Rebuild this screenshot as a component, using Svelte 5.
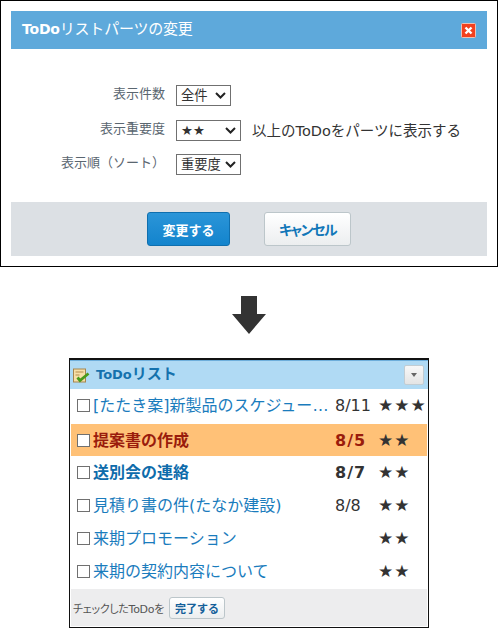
<script lang="ts">
	const fields = [
		{ label: '表示件数', options: ['全件'], width: 55 },
		{ label: '表示重要度', options: ['★★'], width: 65, note: '以上のToDoをパーツに表示する' },
		{ label: '表示順（ソート）', options: ['重要度'], width: 65 }
	];

	const todos = [
		{ title: '[たたき案]新製品のスケジュール検討', date: '8/11', stars: '★★★', kind: '' },
		{ title: '提案書の作成', date: '8/5', stars: '★★', kind: 'overdue' },
		{ title: '送別会の連絡', date: '8/7', stars: '★★', kind: 'today' },
		{ title: '見積り書の件(たなか建設)', date: '8/8', stars: '★★', kind: '' },
		{ title: '来期プロモーション', date: '', stars: '★★', kind: '' },
		{ title: '来期の契約内容について', date: '', stars: '★★', kind: '' }
	];
</script>

<div class="page">
	<section class="dialog">
		<header class="dialog-head">
			<h2><b>ToDo</b>リストパーツの変更</h2>
			<svg class="close" width="15" height="15" viewBox="0 0 15 15" aria-label="閉じる">
				<rect x="0.5" y="0.5" width="14" height="14" rx="1" fill="#f2401f" stroke="#eec0b4" />
				<path d="M4.5 4.5l6 6M10.5 4.5l-6 6" stroke="#fff" stroke-width="2.4" />
			</svg>
		</header>

		<div class="fields">
			{#each fields as field}
				<div class="field">
					<span class="label">{field.label}</span>
					<select style="width: {field.width}px">
						{#each field.options as option}
							<option>{option}</option>
						{/each}
					</select>
					{#if field.note}
						<span class="note">{field.note}</span>
					{/if}
				</div>
			{/each}
		</div>

		<footer class="dialog-foot">
			<button class="primary">変更する</button>
			<button class="secondary">キャンセル</button>
		</footer>
	</section>

	<svg class="arrow" width="34" height="38" viewBox="0 0 34 38">
		<path d="M9 0h16v18h9L17 38 0 18h9z" fill="#333" />
	</svg>

	<section class="panel">
		<header class="panel-head">
			<svg width="18" height="18" viewBox="0 0 18 18">
				<rect x="0.5" y="3" width="12" height="13" fill="#f6dfa8" stroke="#a5854e" />
				<path d="M2.5 6h8M2.5 9h4" stroke="#b78d4f" />
				<path d="M4.500 11.500l2.500 3L15.500 7.500" fill="none" stroke="#4a9a1c" stroke-width="2.8" />
			</svg>
			<h3><b>ToDo</b>リスト</h3>
			<button class="menu" aria-label="メニュー"><span></span></button>
		</header>

		<ul>
			{#each todos as todo}
				<li class={todo.kind}>
					<span class="check"></span>
					<span class="title">{todo.title}</span>
					<span class="date">{todo.date}</span>
					<span class="stars">{todo.stars}</span>
				</li>
			{/each}
		</ul>

		<footer class="panel-foot">
			<span>チェックしたToDoを</span>
			<button class="done">完了する</button>
		</footer>
	</section>
</div>

<style>
	:global(body) {
		margin: 0;
		background: #fff;
		font-family: "DejaVu Sans", "Noto Sans CJK JP", sans-serif;
	}

	.page {
		width: 498px;
		display: flex;
		flex-direction: column;
		align-items: center;
	}

	.dialog {
		box-sizing: border-box;
		width: 498px;
		height: 267px;
		padding: 10px;
		border: 1px solid #000;
		display: flex;
		flex-direction: column;
	}

	.dialog-head {
		height: 38px;
		flex: none;
		padding: 0 11px;
		background: #5ea9db;
		color: #fff;
		display: flex;
		align-items: center;
		justify-content: space-between;
	}

	.dialog-head h2 {
		margin: -5px 0 0;
		font-size: 15px;
		font-weight: 400;
		letter-spacing: -0.2px;
	}

	.dialog-head b {
		font-size: 14px;
	}

	.fields {
		flex: 1;
		padding-top: 36px;
		display: flex;
		flex-direction: column;
		gap: 13.5px;
	}

	.field {
		display: flex;
		align-items: center;
		height: 21px;
		font-size: 13px;
		color: #333;
	}

	.label {
		width: 154px;
		margin-right: 11px;
		text-align: right;
		color: #5a6670;
		line-height: 18px;
		margin-top: -3px;
	}

	select {
		appearance: none;
		box-sizing: border-box;
		height: 21px;
		border: 1px solid #707070;
		border-radius: 0;
		background: #fff url("data:image/svg+xml,%3Csvg xmlns='http://www.w3.org/2000/svg' width='11' height='7'%3E%3Cpath d='M1 1l4.500 4.500L10 1' fill='none' stroke='%23222' stroke-width='2'/%3E%3C/svg%3E") no-repeat right 4px center;
		color: #333;
		font: 13.3px "DejaVu Sans", "Noto Sans CJK JP", sans-serif;
		padding: 0 0 0 4px;
	}

	.note {
		margin-left: 11px;
		font-size: 14.5px;
		margin-top: -1px;
	}

	.dialog-foot {
		height: 54px;
		flex: none;
		background: #dce0e4;
		display: flex;
		align-items: center;
		justify-content: center;
		gap: 34px;
	}

	button {
		font-family: inherit;
		cursor: pointer;
	}

	.primary,
	.secondary {
		height: 34px;
		border-radius: 3px;
		font-size: 13px;
		font-weight: 700;
		padding: 0;
	}

	.primary {
		width: 83px;
		border: 1px solid #0f6fae;
		background: linear-gradient(#2b95d8, #1384cd);
		color: #fff;
	}

	.secondary {
		width: 87px;
		border: 1px solid #bcc6ca;
		background: linear-gradient(#fff, #eceeef);
		color: #1277b8;
		font-size: 14px;
		letter-spacing: -1.5px;
		font-feature-settings: "palt";
	}

	.arrow {
		margin-top: 29px;
		flex: none;
	}

	.panel {
		box-sizing: border-box;
		width: 360px;
		height: 270px;
		margin-top: 24px;
		border: 1px solid #111;
		border-top-width: 2px;
		display: flex;
		flex-direction: column;
	}

	.panel-head {
		height: 29px;
		flex: none;
		box-sizing: border-box;
		border-top: 1px solid #6eaedb;
		background: #b0daf4;
		padding: 0 4px 0 3px;
		display: flex;
		align-items: center;
		gap: 5px;
	}

	.panel-head h3 {
		flex: 1;
		margin: -5px 0 0;
		font-size: 15px;
		font-weight: 700;
		color: #1572ad;
	}

	.panel-head b {
		font-size: 13px;
	}

	.menu {
		width: 20px;
		height: 20px;
		padding: 0;
		border: 1px solid #c2cdd3;
		border-radius: 2px;
		background: linear-gradient(#f8f8f8, #e4e4e4);
		display: flex;
		align-items: center;
		justify-content: center;
	}

	.menu span {
		border: 3px solid transparent;
		border-top: 4px solid #666;
		border-bottom: 0;
	}

	ul {
		list-style: none;
		margin: 0;
		padding: 0;
		flex: 1;
	}

	li {
		height: 33px;
		box-sizing: border-box;
		margin: 0 1px;
		padding-left: 6px;
		display: flex;
		align-items: center;
		font-size: 16px;
		color: #333;
	}

	li:first-child {
		height: 32px;
		margin-bottom: 3px;
	}

	.check {
		box-sizing: border-box;
		width: 13px;
		height: 13px;
		border: 1px solid #707070;
		background: #fff;
		flex: none;
		margin-right: 3px;
	}

	.title {
		width: 239px;
		margin: -3px 3px 0 0;
		flex: none;
		color: #1a7cbd;
		white-space: nowrap;
		overflow: hidden;
		text-overflow: ellipsis;
	}

	.date {
		width: 43px;
		flex: none;
	}

	.stars {
		color: #333;
		white-space: nowrap;
		font-size: 17px;
		letter-spacing: 1px;
		margin-top: -1px;
	}

	.today .title {
		color: #0e6cab;
		font-weight: 700;
	}

	.today .date,
	.overdue .date {
		font-weight: 700;
		letter-spacing: 1px;
	}

	.overdue {
		height: 32px;
		background: #ffc177;
	}

	.overdue .title,
	.overdue .date {
		color: #9a1c0c;
		font-weight: 700;
	}

	.panel-foot {
		height: 37px;
		flex: none;
		margin: 0 1px 1px;
		background: #ededee;
		padding-left: 2px;
		display: flex;
		align-items: center;
		gap: 5px;
		font-size: 11px;
		letter-spacing: -0.3px;
		color: #555;
		font-feature-settings: "palt";
	}

	.done {
		height: 22px;
		width: 56px;
		padding: 0;
		border: 1px solid #bcc6ca;
		border-radius: 3px;
		background: linear-gradient(#fff, #eceeef);
		font-size: 11px;
		font-weight: 700;
		letter-spacing: 0;
		color: #14609a;
	}
</style>
